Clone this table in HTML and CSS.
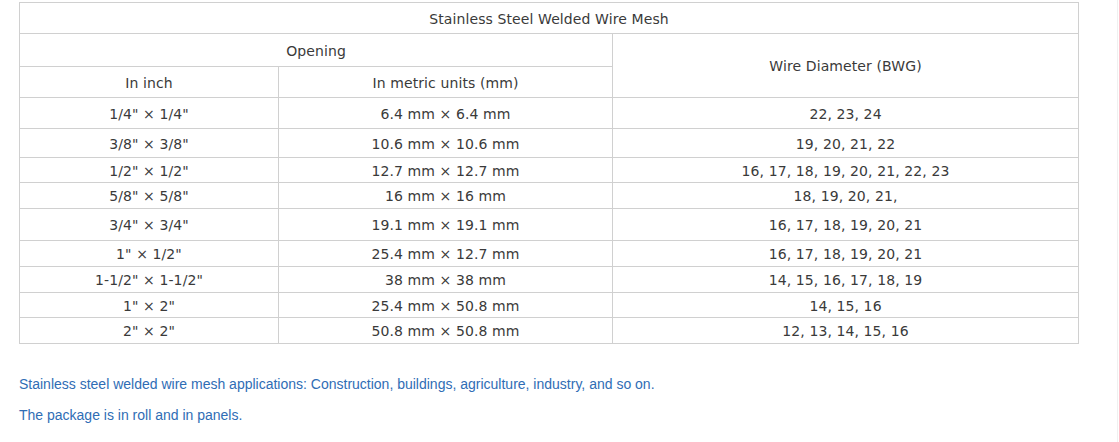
FILE: index.html
```html
<!DOCTYPE html>
<html>
<head>
<meta charset="utf-8">
<link rel="stylesheet" href="styles.css">
</head>
<body>
<div class="page">
  <table class="spec">
    <colgroup>
      <col class="c1">
      <col class="c2">
      <col class="c3">
    </colgroup>
    <tr class="r-title"><td colspan="3">Stainless Steel Welded Wire Mesh</td></tr>
    <tr class="r-open"><td colspan="2">Opening</td><td rowspan="2">Wire Diameter (BWG)</td></tr>
    <tr class="r-units"><td>In inch</td><td>In metric units (mm)</td></tr>
    <tr class="h31"><td>1/4" × 1/4"</td><td>6.4 mm × 6.4 mm</td><td>22, 23, 24</td></tr>
    <tr class="h29"><td>3/8" × 3/8"</td><td>10.6 mm × 10.6 mm</td><td>19, 20, 21, 22</td></tr>
    <tr class="h25"><td>1/2" × 1/2"</td><td>12.7 mm × 12.7 mm</td><td>16, 17, 18, 19, 20, 21, 22, 23</td></tr>
    <tr class="h26"><td>5/8" × 5/8"</td><td>16 mm × 16 mm</td><td>18, 19, 20, 21,</td></tr>
    <tr class="h32"><td>3/4" × 3/4"</td><td>19.1 mm × 19.1 mm</td><td>16, 17, 18, 19, 20, 21</td></tr>
    <tr class="h26"><td>1" × 1/2"</td><td>25.4 mm × 12.7 mm</td><td>16, 17, 18, 19, 20, 21</td></tr>
    <tr class="h26"><td>1-1/2" × 1-1/2"</td><td>38 mm × 38 mm</td><td>14, 15, 16, 17, 18, 19</td></tr>
    <tr class="h25"><td>1" × 2"</td><td>25.4 mm × 50.8 mm</td><td>14, 15, 16</td></tr>
    <tr class="h26"><td>2" × 2"</td><td>50.8 mm × 50.8 mm</td><td>12, 13, 14, 15, 16</td></tr>
  </table>
  <p class="note">Stainless steel welded wire mesh applications: Construction, buildings, agriculture, industry, and so on.</p>
  <p class="note">The package is in roll and in panels.</p>
</div>
</body>
</html>
```
FILE: styles.css
```css
html, body {
  margin: 0;
  padding: 0;
  background: #fff;
}
.page {
  width: 1118px;
  height: 442px;
  border-right: 1px solid #f0f0f0;
  padding-top: 2px;
  box-sizing: border-box;
}
.spec {
  margin-left: 19px;
  width: 1059px;
  border-collapse: collapse;
  table-layout: fixed;
  font-family: "DejaVu Sans", Verdana, sans-serif;
  font-size: 14px;
  letter-spacing: 0.1px;
  color: #3a3a3a;
}
.c1 { width: 259px; }
.c2 { width: 334px; }
.c3 { width: 466px; }
.spec td {
  border: 1px solid #d0d0d0;
  text-align: center;
  vertical-align: middle;
  padding: 1px 4px 0;
  line-height: 16px;
}
.r-title { height: 31px; }
.r-open { height: 33px; }
.r-units { height: 31px; }
.h31 { height: 31px; }
.h29 { height: 29px; }
.h25 { height: 25px; }
.h26 { height: 26px; }
.h32 { height: 32px; }
.note {
  margin: 0 0 0 19px;
  font-family: "Liberation Sans", Arial, sans-serif;
  font-size: 14px;
  line-height: 31px;
  color: #2f6db5;
}
.spec + .note {
  margin-top: 25px;
}
```
